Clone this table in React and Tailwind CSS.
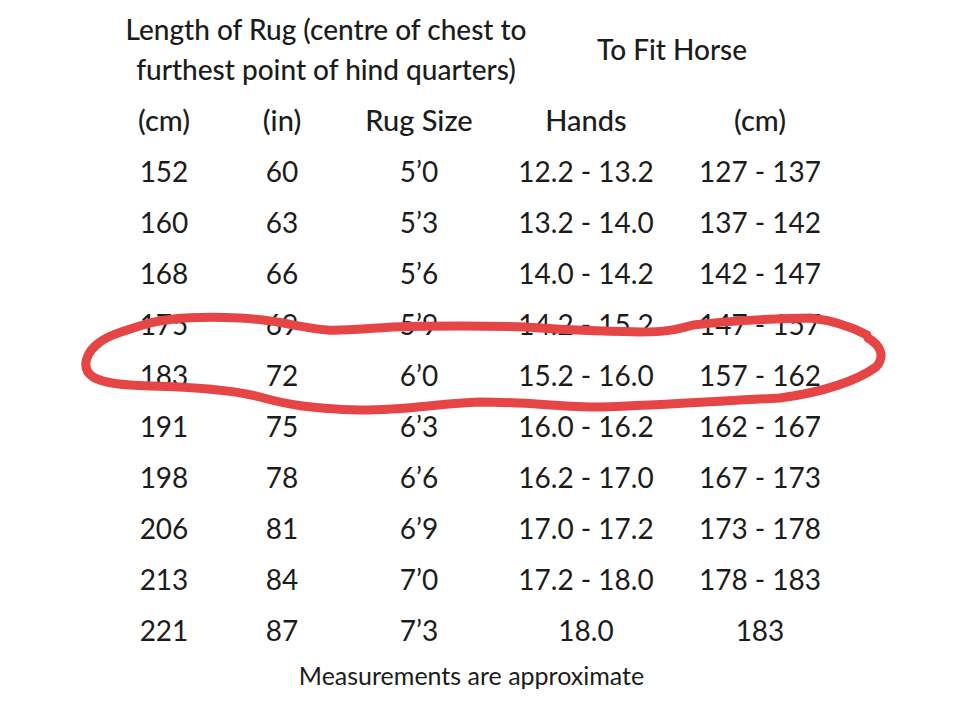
import React from 'react';

const rows = [
  ['152', '60', '5’0', '12.2 - 13.2', '127 - 137'],
  ['160', '63', '5’3', '13.2 - 14.0', '137 - 142'],
  ['168', '66', '5’6', '14.0 - 14.2', '142 - 147'],
  ['175', '69', '5’9', '14.2 - 15.2', '147 - 157'],
  ['183', '72', '6’0', '15.2 - 16.0', '157 - 162'],
  ['191', '75', '6’3', '16.0 - 16.2', '162 - 167'],
  ['198', '78', '6’6', '16.2 - 17.0', '167 - 173'],
  ['206', '81', '6’9', '17.0 - 17.2', '173 - 178'],
  ['213', '84', '7’0', '17.2 - 18.0', '178 - 183'],
  ['221', '87', '7’3', '18.0', '183'],
];

const cols = 'grid grid-cols-[120px_116px_158px_176px_172px]';

export default function App() {
  return (
    <div className="relative w-[960px] h-[728px] bg-white text-[#1c1c1c] overflow-hidden font-['Lato',sans-serif]">
      <div className="pl-[104px] pt-[9px]">
        {/* header */}
        <div className={`${cols} h-[85px] text-[28px] font-medium`}>
          <div className="col-span-3 pl-[50px] flex flex-col items-center leading-[40px] whitespace-nowrap">
            <span>Length of Rug (centre of chest to</span>
            <span>furthest point of hind quarters)</span>
          </div>
          <div className="col-span-2 flex items-center justify-center pb-[6px] whitespace-nowrap">To Fit Horse</div>
        </div>

        <div className={`${cols} h-[51px] items-center text-center text-[29px] font-medium`}>
          <div>(cm)</div>
          <div>(in)</div>
          <div>Rug Size</div>
          <div>Hands</div>
          <div>(cm)</div>
        </div>

        {rows.map((r) => (
          <div key={r[0]} className={`${cols} h-[51px] items-center text-center text-[28px] font-normal`}>
            {r.map((c, i) => (
              <div key={i}>{c}</div>
            ))}
          </div>
        ))}
      </div>

      <div className="mt-[5px] pr-[17px] text-center leading-[30px] text-[25px] font-normal">
        Measurements are approximate
      </div>

      {/* hand-drawn annotation */}
      <svg className="absolute inset-0 pointer-events-none" width="960" height="728" viewBox="0 0 960 728">
        <path
          d="M 867 335 C 850 326 830 320 810 318 C 790 318 740 320 693 325 C 675 330 665 332 640 332 C 600 331 570 330 540 328 C 500 325 420 326 393 327 C 360 329 340 331 327 330 C 300 328 280 320 240 318 C 200 316 165 318 143 325 C 120 332 108 336 100 342 C 86 352 80 368 93 377 C 105 384 125 385 150 386 C 190 387 230 389 260 397 C 285 404 310 409 360 410 C 410 410 440 403 480 402 C 530 402 560 407 600 407 C 660 405 720 401 780 398 C 825 392 858 380 876 367 C 886 356 880 345 868 338"
          fill="none"
          stroke="#e64545"
          strokeWidth="9"
          strokeLinecap="round"
          strokeLinejoin="round"
        />
      </svg>
    </div>
  );
}
